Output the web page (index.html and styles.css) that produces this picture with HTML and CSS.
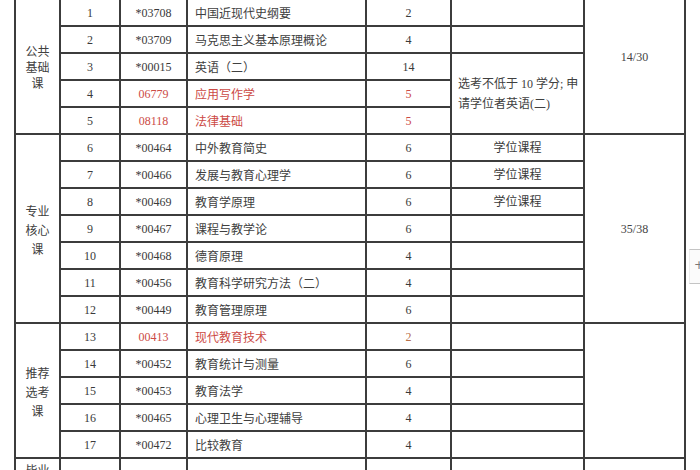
FILE: index.html
```html
<!DOCTYPE html>
<html lang="zh-CN">
<head>
<meta charset="utf-8">
<title>课程设置</title>
<link rel="stylesheet" href="styles.css">
</head>
<body>
<table class="plan">
  <colgroup>
    <col class="c-cat"><col class="c-no"><col class="c-code"><col class="c-name"><col class="c-cr"><col class="c-rm"><col class="c-tot">
  </colgroup>
  <tbody>
    <tr>
      <td class="cat" rowspan="5"><div class="cat-txt l16">公共<br>基础<br>课</div></td>
      <td>1</td><td>*03708</td><td class="name">中国近现代史纲要</td><td>2</td><td></td>
      <td class="tot up" rowspan="5">14/30</td>
    </tr>
    <tr><td>2</td><td>*03709</td><td class="name">马克思主义基本原理概论</td><td>4</td><td></td></tr>
    <tr><td>3</td><td>*00015</td><td class="name">英语（二）</td><td>14</td>
      <td class="remark" rowspan="3">选考不低于 10 学分; 申<br>请学位者英语(二)</td></tr>
    <tr class="red"><td class="blk">4</td><td>06779</td><td class="name">应用写作学</td><td>5</td></tr>
    <tr class="red"><td class="blk">5</td><td>08118</td><td class="name">法律基础</td><td>5</td></tr>

    <tr>
      <td class="cat" rowspan="7"><div class="cat-txt l19">专业<br>核心<br>课</div></td>
      <td>6</td><td>*00464</td><td class="name">中外教育简史</td><td>6</td><td>学位课程</td>
      <td class="tot" rowspan="7">35/38</td>
    </tr>
    <tr><td>7</td><td>*00466</td><td class="name">发展与教育心理学</td><td>6</td><td>学位课程</td></tr>
    <tr><td>8</td><td>*00469</td><td class="name">教育学原理</td><td>6</td><td>学位课程</td></tr>
    <tr><td>9</td><td>*00467</td><td class="name">课程与教学论</td><td>6</td><td></td></tr>
    <tr><td>10</td><td>*00468</td><td class="name">德育原理</td><td>4</td><td></td></tr>
    <tr><td>11</td><td>*00456</td><td class="name">教育科学研究方法（二）</td><td>4</td><td></td></tr>
    <tr><td>12</td><td>*00449</td><td class="name">教育管理原理</td><td>6</td><td></td></tr>

    <tr class="red">
      <td class="cat" rowspan="5"><div class="cat-txt l19">推荐<br>选考<br>课</div></td>
      <td class="blk">13</td><td>00413</td><td class="name">现代教育技术</td><td class="brown">2</td><td></td>
      <td class="tot" rowspan="5"></td>
    </tr>
    <tr><td>14</td><td>*00452</td><td class="name">教育统计与测量</td><td>6</td><td></td></tr>
    <tr><td>15</td><td>*00453</td><td class="name">教育法学</td><td>4</td><td></td></tr>
    <tr><td>16</td><td>*00465</td><td class="name">心理卫生与心理辅导</td><td>4</td><td></td></tr>
    <tr><td>17</td><td>*00472</td><td class="name">比较教育</td><td>4</td><td></td></tr>

    <tr>
      <td class="cat top"><div class="cat-txt l19">毕业<br>环节</div></td>
      <td></td><td></td><td class="name"></td><td></td><td></td><td></td>
    </tr>
  </tbody>
</table>
<div class="side-tool"><span class="plus">+</span></div>
</body>
</html>
```

FILE: styles.css
```css
html, body {
  margin: 0;
  padding: 0;
  background: #ffffff;
  overflow: hidden;
  height: 470px;
}

body {
  font-family: "Liberation Serif", "Noto Sans CJK SC", serif;
  font-size: 12px;
  color: #3a3a3a;
  position: relative;
}

.plan {
  border-collapse: collapse;
  table-layout: fixed;
  width: 672px;
  margin-left: 14px;
  margin-top: -2px;
}

.c-cat  { width: 45px; }
.c-no   { width: 60px; }
.c-code { width: 67px; }
.c-name { width: 179px; }
.c-cr   { width: 85px; }
.c-rm   { width: 133px; }
.c-tot  { width: 101px; }

.plan td {
  border: 2px solid #3c3c3c;
  height: 25px;
  padding: 0;
  text-align: center;
  vertical-align: middle;
  white-space: nowrap;
  font-family: "Liberation Serif", "Noto Sans CJK SC", serif;
  line-height: 14px;
}

.plan td.name {
  text-align: left;
  padding-left: 7px;
  font-family: "Noto Sans CJK SC", sans-serif;
  color: #404040;
}

.plan td.cat {
  font-family: "Noto Sans CJK SC", sans-serif;
  color: #404040;
}

.plan td.cat.top {
  vertical-align: top;
}

.cat-txt.l16 { line-height: 16px; }
.cat-txt.l19 { line-height: 19px; padding-top: 1px; }

.plan td.remark {
  text-align: left;
  padding-left: 6px;
  line-height: 20px;
  white-space: normal;
  font-family: "Liberation Serif", "Noto Sans CJK SC", sans-serif;
  color: #404040;
}

.plan td.tot {
  font-size: 12px;
  color: #444;
}

.plan td.tot.up {
  padding-bottom: 20px;
}

.plan tr.red td {
  color: #cc4a45;
}

.plan tr.red td.blk {
  color: #3a3a3a;
}

.plan tr.red td.cat,
.plan tr.red td.tot {
  color: #404040;
}

.plan tr.red td.brown {
  color: #b8704a;
}

.side-tool {
  position: absolute;
  left: 689px;
  top: 249px;
  width: 20px;
  height: 33px;
  border-top: 1px solid #c4c4c4;
  border-bottom: 1px solid #c4c4c4;
  border-left: 1px solid #ececec;
  background: #fbfbfb;
}

.side-tool .plus {
  position: absolute;
  left: 4px;
  top: 8px;
  font-family: "DejaVu Sans", sans-serif;
  font-size: 12px;
  line-height: 14px;
  color: #777;
}
```
